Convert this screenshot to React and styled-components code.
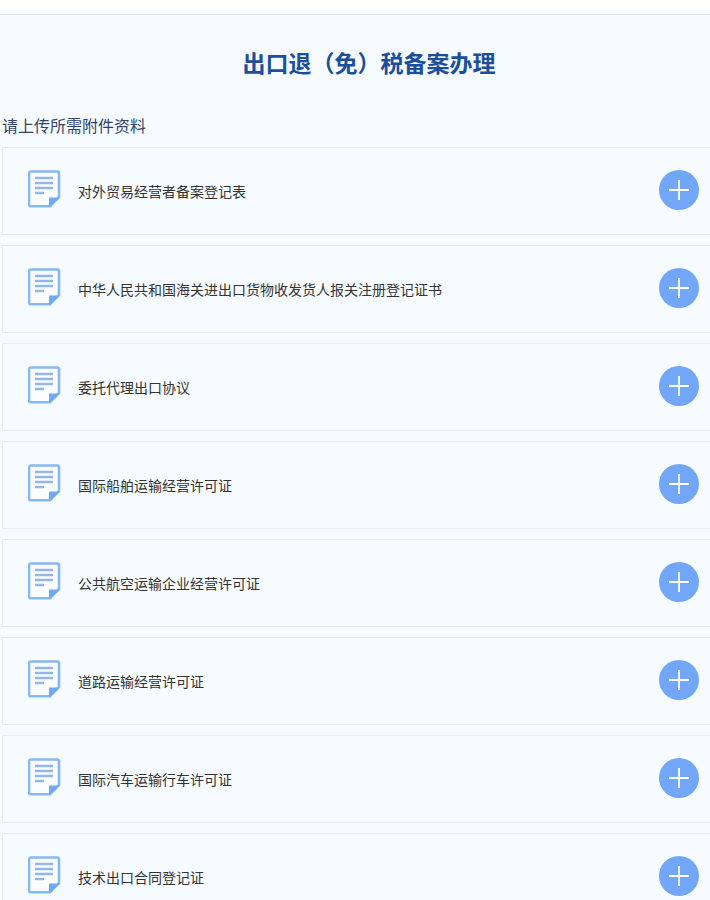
import React from "react";
import styled, { createGlobalStyle } from "styled-components";

const GlobalStyle = createGlobalStyle`
  html, body {
    margin: 0;
    padding: 0;
    background: #fff;
    overflow: hidden;
    font-family: "Noto Sans CJK SC", "Liberation Sans", sans-serif;
  }
`;
const Page = styled.div`
  width: 710px;
  height: 900px;
  overflow: hidden;
  padding-top: 14px;
  box-sizing: border-box;
`;
const Panel = styled.div`
  border-top: 1px solid #dbe5ef;
  background: #f6fbff;
  padding: 0 0 0 2px;
  height: 885px;
`;
const Title = styled.h2`
  margin: 0;
  padding: 31px 0 0 26px;
  height: 60px;
  line-height: 32px;
  font-size: 23px;
  font-weight: 700;
  color: #1b4e9b;
  text-align: center;
  box-sizing: content-box;
`;
const Hint = styled.div`
  margin-top: 11px;
  height: 20px;
  line-height: 16px;
  font-size: 16px;
  color: #33446a;
`;
const List = styled.div`
  display: flex;
  flex-direction: column;
  gap: 10px;
  margin-top: 10px;
`;
const Card = styled.div`
  display: flex;
  align-items: center;
  height: 88px;
  box-sizing: border-box;
  border: 1px solid #e6ebf0;
  border-right: none;
  padding: 0 11px 0 25px;
  width: 708px;
`;
const DocBox = styled.div`
  width: 34px;
  height: 38px;
  margin-top: -4px;
  flex-shrink: 0;
`;
const Name = styled.div`
  margin-left: 16px;
  flex: 1;
  font-size: 14px;
  color: #333;
`;
const AddButton = styled.button`
  width: 40px;
  height: 40px;
  margin-top: -3px;
  padding: 0;
  border: none;
  border-radius: 50%;
  background: #72a6f8;
  display: flex;
  align-items: center;
  justify-content: center;
  cursor: pointer;
`;

const DocIcon = () => (
  <svg width="34" height="38" viewBox="0 0 34 38" fill="none">
    <path
      d="M3 1.500h26a2 2 0 0 1 2 2V27L22 36.300H3a2 2 0 0 1-2-2v-30.800a2 2 0 0 1 2-2z"
      fill="#fcfdff"
      stroke="#85b8f5"
      strokeWidth="2.600"
    />
    <path d="M7 8h18M7 13h18M7 18h18M7 23h9" stroke="#92b7ea" strokeWidth="2.500" />
    <path d="M21 27.500h11L21 37.500z" fill="#6fa9f5" />
  </svg>
);

const PlusIcon = () => (
  <svg width="22" height="22" viewBox="0 0 22 22">
    <path d="M11 1v20M1 11h20" stroke="#fff" strokeWidth="1.800" />
  </svg>
);

const files = [
  "对外贸易经营者备案登记表",
  "中华人民共和国海关进出口货物收发货人报关注册登记证书",
  "委托代理出口协议",
  "国际船舶运输经营许可证",
  "公共航空运输企业经营许可证",
  "道路运输经营许可证",
  "国际汽车运输行车许可证",
  "技术出口合同登记证",
];

export default function App() {
  return (
    <Page>
      <GlobalStyle />
      <Panel>
        <Title>出口退（免）税备案办理</Title>
        <Hint>请上传所需附件资料</Hint>
        <List>
          {files.map((name) => (
            <Card key={name}>
              <DocBox>
                <DocIcon />
              </DocBox>
              <Name>{name}</Name>
              <AddButton>
                <PlusIcon />
              </AddButton>
            </Card>
          ))}
        </List>
      </Panel>
    </Page>
  );
}
